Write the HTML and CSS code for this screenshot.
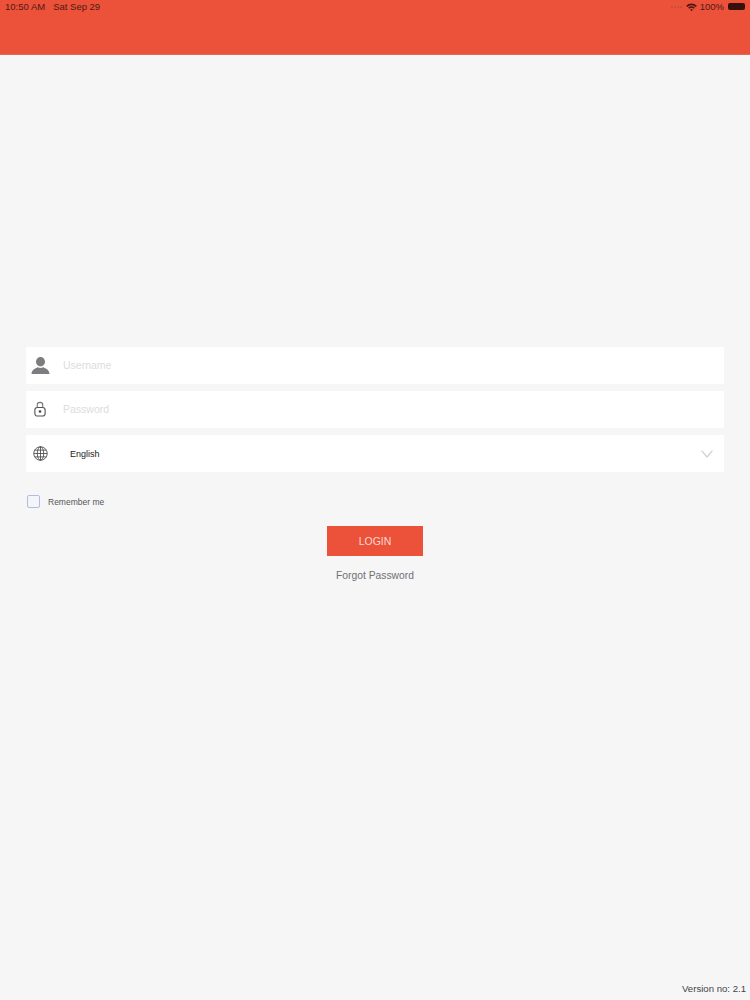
FILE: index.html
```html
<!DOCTYPE html>
<html lang="en">
<head>
<meta charset="utf-8">
<title>Login</title>
<link rel="stylesheet" href="styles.css">
</head>
<body>
<div class="page">
  <header class="topbar">
    <div class="status">
      <div class="status-left"><span>10:50 AM</span><span>Sat Sep 29</span></div>
      <div class="status-right">
        <span class="signal"><i></i><i></i><i></i><i></i></span>
        <svg class="wifi" viewBox="0 0 12 9" width="11" height="8"><path d="M0 3 A8.5 8.5 0 0 1 12 3 L10.7 4.4 A6.6 6.6 0 0 0 1.3 4.4 Z M2.2 5.3 A5.3 5.3 0 0 1 9.8 5.3 L8.5 6.6 A3.4 3.4 0 0 0 3.5 6.6 Z M4.4 7.5 A2.3 2.3 0 0 1 7.6 7.5 L6 9 Z" fill="#4a1712"/></svg>
        <span>100%</span>
        <span class="battery"></span>
      </div>
    </div>
  </header>
  <main class="form">
    <div class="field">
      <span class="field-icon icon-raised">
        <svg viewBox="0 0 20 18" width="19" height="17"><ellipse cx="10" cy="5" rx="4.8" ry="5" fill="#7d7d7f"/><path d="M0.5 18 C0.5 13.5 4 12.4 7.2 10.8 C9 11.8 11 11.8 12.8 10.8 C16 12.4 19.5 13.5 19.5 18 Z" fill="#7d7d7f"/></svg>
      </span>
      <span class="placeholder">Username</span>
    </div>
    <div class="field">
      <span class="field-icon icon-raised">
        <svg viewBox="0 0 14 18" width="12" height="16"><path d="M3.8 7.5 V4.5 A3.2 3.2 0 0 1 10.2 4.5 V7.5" fill="none" stroke="#777" stroke-width="1.3"/><rect x="1" y="7.2" width="12" height="10" rx="3" fill="#fff" stroke="#555" stroke-width="1.3"/><circle cx="7" cy="12" r="1.5" fill="#444"/></svg>
      </span>
      <span class="placeholder">Password</span>
    </div>
    <div class="field">
      <span class="field-icon">
        <svg viewBox="0 0 16 16" width="15" height="15" fill="none" stroke="#4a4a4a" stroke-width=".9"><circle cx="8" cy="8" r="7.2"/><ellipse cx="8" cy="8" rx="3.4" ry="7.2"/><path d="M8 .8 V15.2 M.8 8 H15.2 M1.8 4.4 H14.2 M1.8 11.6 H14.2"/></svg>
      </span>
      <span class="lang">English</span>
      <svg class="chevron" viewBox="0 0 12 8" width="12" height="8"><path d="M.6 .6 L6 7 L11.4 .6" fill="none" stroke="#cfcfd1" stroke-width="1.2"/></svg>
    </div>
    <label class="remember"><span class="checkbox"></span><span>Remember me</span></label>
    <div class="actions">
      <button class="login" type="button">LOGIN</button>
      <a class="forgot">Forgot Password</a>
    </div>
  </main>
  <footer class="version">Version no: 2.1</footer>
</div>
</body>
</html>
```

FILE: styles.css
```css
* { box-sizing: border-box; }
html, body { margin: 0; height: 100%; }
body { font-family: "Liberation Sans", Arial, sans-serif; background: #f6f6f7; }
.page { height: 1000px; display: flex; flex-direction: column; }
.topbar { height: 55px; background: #ec513a; border-bottom: 1px solid #dc6b59; flex: none; }
.status { display: flex; justify-content: space-between; align-items: center; padding: 0 5px; height: 13px; font-size: 9.5px; color: #4f1a14; }
.status-left { display: flex; gap: 8px; }
.status-right { display: flex; align-items: center; gap: 3px; }
.signal { display: flex; gap: 1px; margin-right: 1px; }
.signal i { width: 2px; height: 2px; background: #c9503d; display: block; }
.battery { width: 17px; height: 7px; background: #35100c; border-radius: 2px; margin-left: 1px; display: block; }
.form { margin-top: 292px; padding: 0 26px; display: flex; flex-direction: column; flex: 1; }
.field { height: 37px; background: #fff; margin-bottom: 7px; display: flex; align-items: center; position: relative; }
.field-icon { width: 28px; display: flex; justify-content: center; flex: none; }
.icon-raised { margin-top: -1px; }
.placeholder { margin: -2px 0 0 9px; font-size: 10.5px; color: #dcdcde; }
.lang { margin-left: 16px; font-size: 9px; color: #222; }
.chevron { margin-left: auto; margin-right: 11px; }
.remember { display: flex; align-items: center; gap: 8px; margin: 16px 0 0 1px; font-size: 8.5px; color: #555; }
.checkbox { width: 13px; height: 13px; border: 1px solid #b0bedd; border-radius: 2px; background: #f4f5f9; }
.actions { display: flex; flex-direction: column; align-items: center; margin-top: 18px; }
.login { width: 96px; height: 30px; border: 0; background: #ec513a; color: #fbd9d2; font: 10.5px "Liberation Sans", Arial, sans-serif; padding: 0; }
.forgot { margin-top: 14px; font-size: 10.3px; color: #707072; }
.version { flex: none; text-align: right; padding: 0 4px 6px 0; font-size: 9.6px; color: #444; }
```
